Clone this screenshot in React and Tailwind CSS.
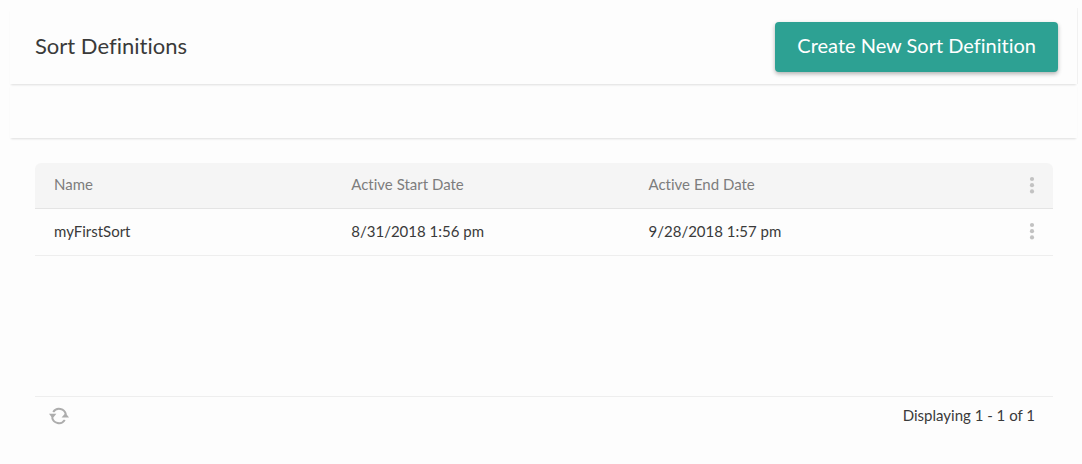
import React from "react";

const rows = [
  { name: "myFirstSort", start: "8/31/2018 1:56 pm", end: "9/28/2018 1:57 pm" },
];

function DotsButton({ label }) {
  return (
    <button type="button" aria-label={label} className="block ml-auto mr-3 w-[18px] cursor-pointer text-[#c2c2c2]">
      <svg width="18" height="18" viewBox="0 0 18 18" fill="currentColor" aria-hidden="true" className="block">
        <circle cx="9" cy="3" r="2.1" />
        <circle cx="9" cy="9.2" r="2.1" />
        <circle cx="9" cy="15.4" r="2.1" />
      </svg>
    </button>
  );
}

function RefreshIcon() {
  return (
    <svg width="20" height="18" viewBox="0 0 20 18" fill="none" aria-hidden="true" className="block">
      <path d="M4.2 5A7 7 0 0 1 16.9 7.6" stroke="#adadad" strokeWidth="2" />
      <path d="M15.8 13A7 7 0 0 1 3.1 10.4" stroke="#adadad" strokeWidth="2" />
      <path d="M0 6.8H7.4L3.5 11.4Z" fill="#adadad" />
      <path d="M20 10.6H12.6L16.5 6Z" fill="#adadad" />
    </svg>
  );
}

export default function App() {
  return (
    <div className="min-h-screen bg-[#fdfdfd] pt-2 pr-[5px] pb-[29px] pl-[10px] font-['Lato','Open_Sans',sans-serif] text-[#3a3a3a] [font-variant-ligatures:none]">
      <header className="flex h-[76px] items-center justify-between pt-[2px] pr-[19px] pl-[25px] shadow-[0_2px_2px_-1px_rgba(0,0,0,0.12),1px_0_0_rgba(0,0,0,0.04)]">
        <h1 className="pb-[2px] text-[22px] leading-7">Sort Definitions</h1>
        <button
          type="button"
          className="h-[50px] cursor-pointer rounded-[4px] bg-[#2da193] px-[22px] pb-1 text-xl text-white shadow-[0_2px_4px_rgba(0,0,0,0.3)]"
        >
          Create New Sort Definition
        </button>
      </header>
      <div className="h-[54px] shadow-[0_2px_2px_-1px_rgba(0,0,0,0.12)]" />
      <main className="pt-[25px] pr-6 pl-[25px]">
        <section className="flex min-h-[272px] flex-col overflow-hidden rounded-md">
          <table className="w-full table-fixed border-collapse text-left text-[15px] leading-5">
            <thead className="bg-[#f5f5f5] text-[#7d7d7d]">
              <tr className="h-[45px] border-b border-[#e4e4e4]">
                <th scope="col" className="w-[29.2%] pb-[2px] pl-[19px] font-normal">Name</th>
                <th scope="col" className="w-[29.2%] pb-[2px] pl-[19px] font-normal">Active Start Date</th>
                <th scope="col" className="w-[29.2%] pb-[2px] pl-[19px] font-normal">Active End Date</th>
                <th scope="col"><DotsButton label="Table options" /></th>
              </tr>
            </thead>
            <tbody>
              {rows.map((row) => (
                <tr key={row.name} className="h-[47px] border-b border-[#eee]">
                  <td className="pb-[2px] pl-[19px]">{row.name}</td>
                  <td className="pb-[2px] pl-[19px]">{row.start}</td>
                  <td className="pb-[2px] pl-[19px]">{row.end}</td>
                  <td className="pb-[2px]"><DotsButton label={`Options for ${row.name}`} /></td>
                </tr>
              ))}
            </tbody>
          </table>
          <footer className="mt-auto flex h-[39px] items-center justify-between border-t border-[#eee] pr-[18px] pl-[14px] text-[15px] leading-5">
            <button type="button" aria-label="Refresh" className="cursor-pointer">
              <RefreshIcon />
            </button>
            <span className="pb-[2px]">Displaying 1 - 1 of 1</span>
          </footer>
        </section>
      </main>
    </div>
  );
}
